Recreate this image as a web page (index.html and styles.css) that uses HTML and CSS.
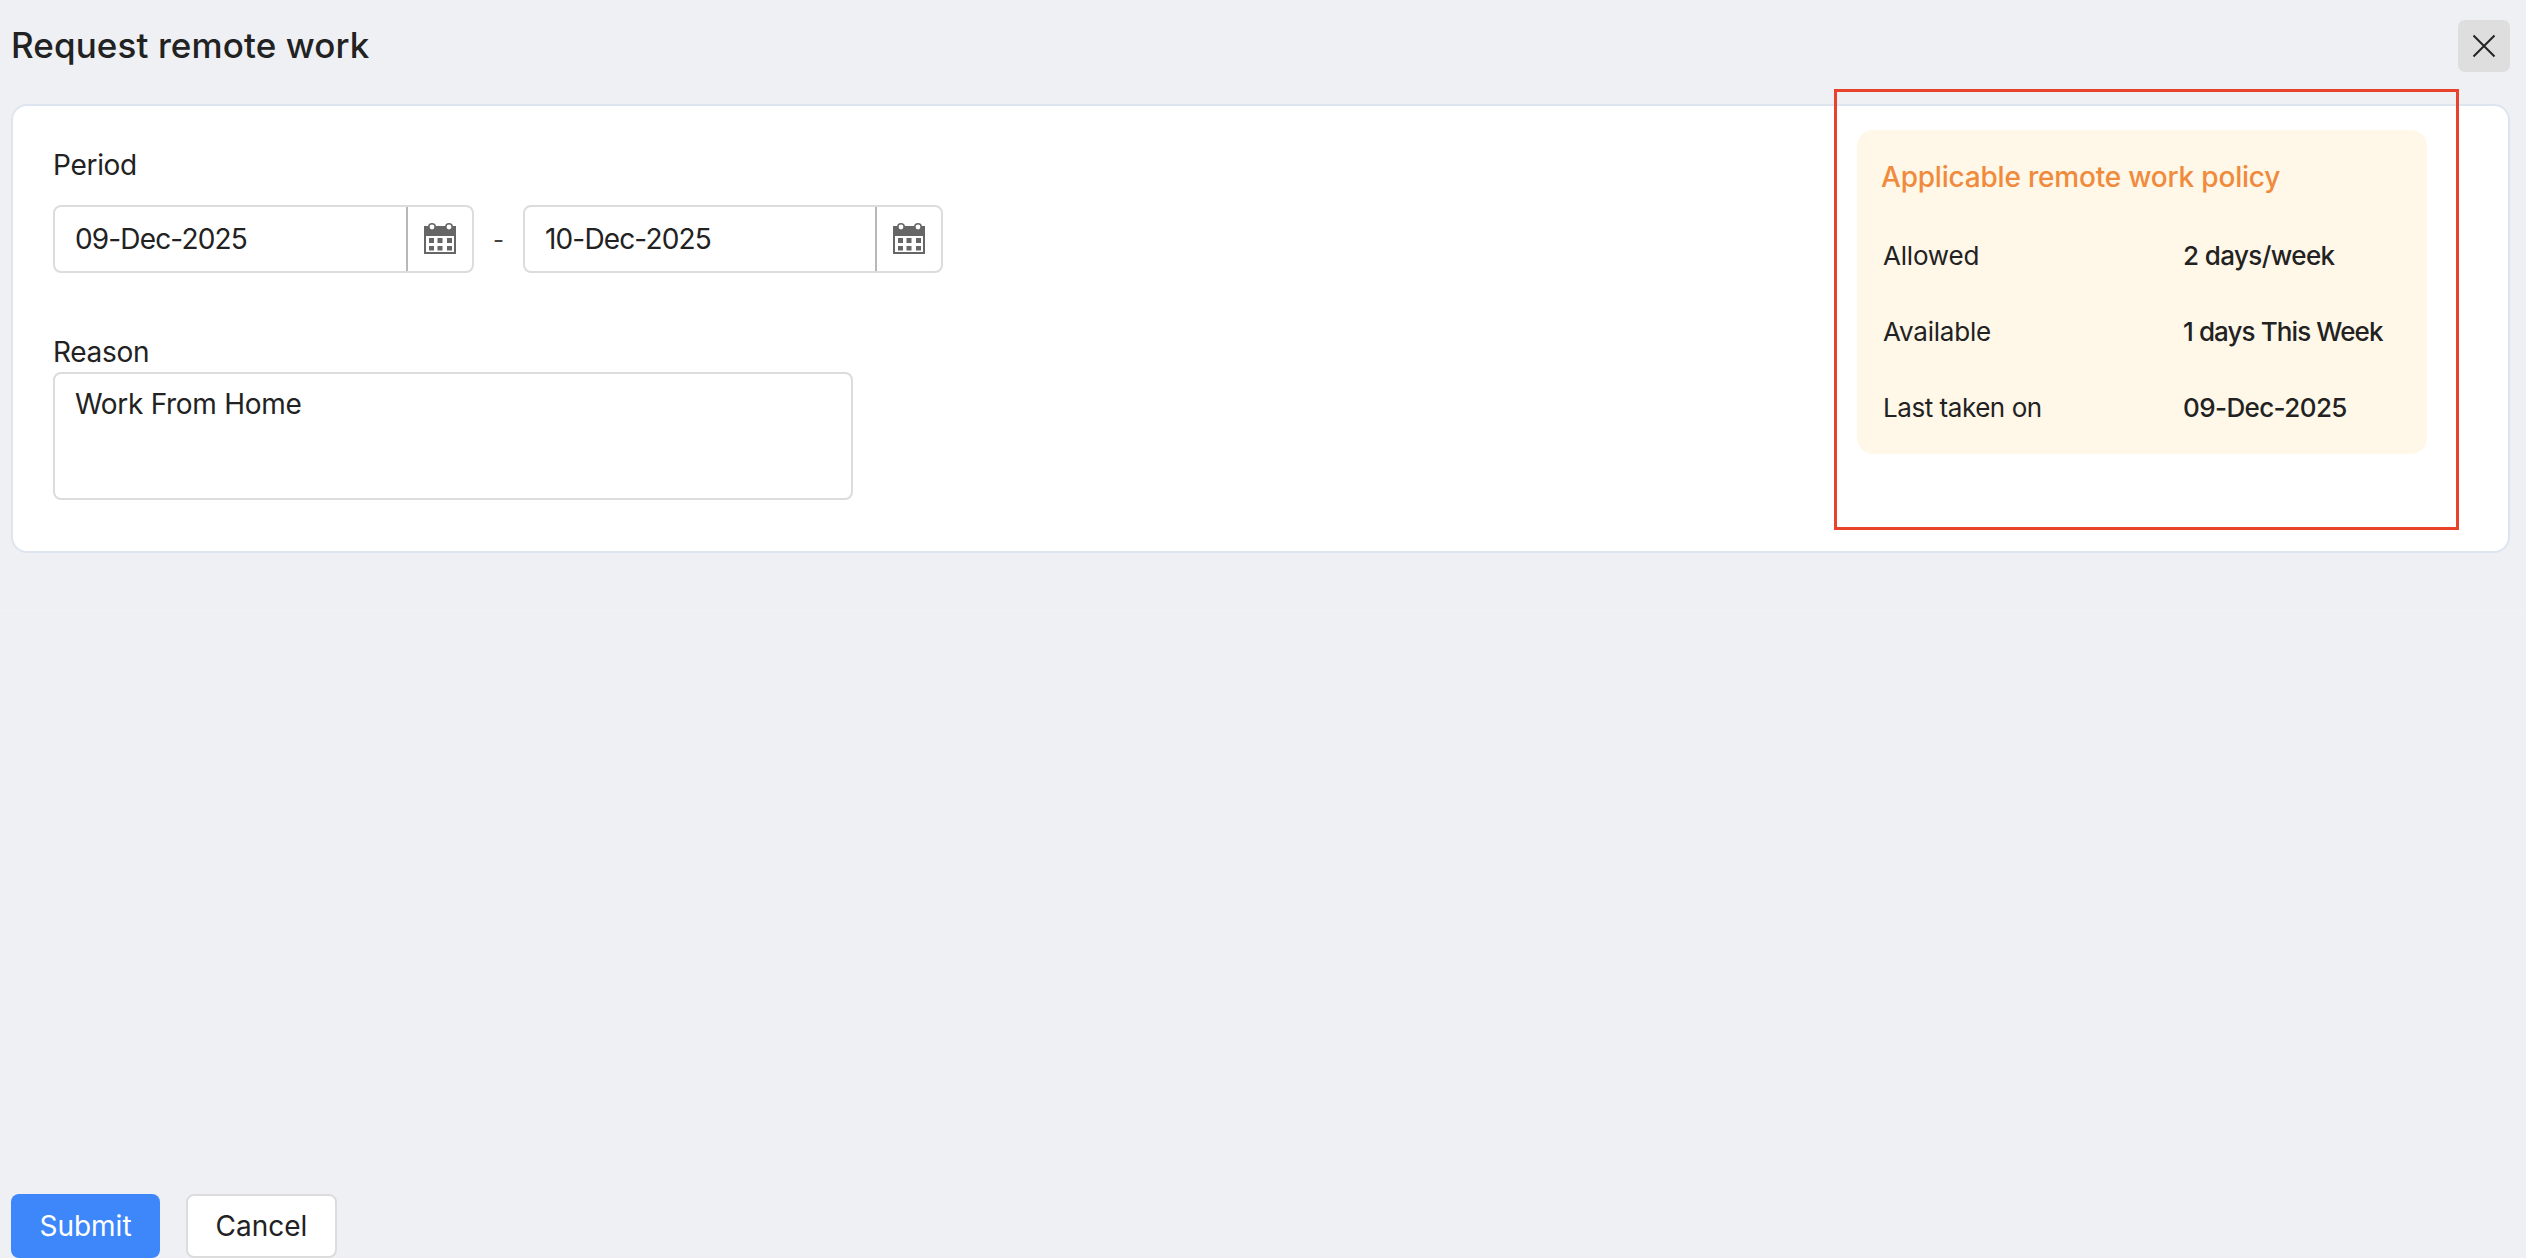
FILE: index.html
```html
<!DOCTYPE html>
<html lang="en">
<head>
<meta charset="utf-8">
<title>Request remote work</title>
<link rel="stylesheet" href="styles.css">
</head>
<body>
<div class="app">
  <header class="header">
    <h1 class="title">Request remote work</h1>
    <button class="close" aria-label="Close">
      <svg width="24" height="24" viewBox="0 0 24 24"><path d="M1.5 1.5L22.5 22.5M22.5 1.5L1.5 22.5" stroke="#222" stroke-width="2" fill="none"/></svg>
    </button>
  </header>
  <main class="card">
    <section class="form">
      <label class="label label-period">Period</label>
      <div class="dates">
        <div class="date date-from">
          <span class="date-value">09-Dec-2025</span>
          <span class="date-icon">
            <svg width="32" height="31" viewBox="0 0 32 31"><rect y="3" width="32" height="28" fill="#666"/><circle cx="8" cy="4" r="4" fill="#666"/><circle cx="25" cy="4" r="4" fill="#666"/><circle cx="8" cy="4" r="2.4" fill="#fff"/><circle cx="25" cy="4" r="2.4" fill="#fff"/><rect x="2" y="13" width="28" height="16" fill="#fff"/><g fill="#666"><rect x="5" y="15" width="5" height="5"/><rect x="13.5" y="15" width="5" height="5"/><rect x="23" y="15" width="5" height="5"/><rect x="5" y="23" width="5" height="4.500"/><rect x="13.500" y="23" width="5" height="4.500"/><rect x="23" y="23" width="5" height="4.500"/></g></svg>
          </span>
        </div>
        <span class="dash">-</span>
        <div class="date">
          <span class="date-value">10-Dec-2025</span>
          <span class="date-icon">
            <svg width="32" height="31" viewBox="0 0 32 31"><rect y="3" width="32" height="28" fill="#666"/><circle cx="8" cy="4" r="4" fill="#666"/><circle cx="25" cy="4" r="4" fill="#666"/><circle cx="8" cy="4" r="2.4" fill="#fff"/><circle cx="25" cy="4" r="2.4" fill="#fff"/><rect x="2" y="13" width="28" height="16" fill="#fff"/><g fill="#666"><rect x="5" y="15" width="5" height="5"/><rect x="13.5" y="15" width="5" height="5"/><rect x="23" y="15" width="5" height="5"/><rect x="5" y="23" width="5" height="4.500"/><rect x="13.500" y="23" width="5" height="4.500"/><rect x="23" y="23" width="5" height="4.500"/></g></svg>
          </span>
        </div>
      </div>
      <label class="label label-reason">Reason</label>
      <div class="reason">Work From Home</div>
    </section>
    <aside class="policy">
      <h2 class="policy-title">Applicable remote work policy</h2>
      <dl class="policy-list">
        <div class="policy-row"><dt>Allowed</dt><dd>2 days/week</dd></div>
        <div class="policy-row"><dt>Available</dt><dd class="tight">1 days This Week</dd></div>
        <div class="policy-row"><dt class="tight-label">Last taken on</dt><dd>09-Dec-2025</dd></div>
      </dl>
    </aside>
  </main>
  <footer class="footer">
    <button class="btn btn-primary">Submit</button>
    <button class="btn btn-secondary">Cancel</button>
  </footer>
  <div class="highlight"></div>
</div>
</body>
</html>
```
FILE: styles.css
```css
* { box-sizing: border-box; }
html, body { margin: 0; padding: 0; }
body { font-family: Inter, "Liberation Sans", sans-serif; color: #222; background: #eef0f4; }
.app { position: relative; width: 2526px; height: 1258px; overflow: hidden; display: flex; flex-direction: column; }
.header { height: 104px; flex: none; display: flex; justify-content: space-between; align-items: flex-start; padding: 20px 16px 0 11px; }
.title { margin: -1px 0 0; font-size: 35px; line-height: 52px; font-weight: 500; color: #222; letter-spacing: 0.1px; }
.close { width: 52px; height: 52px; padding: 0; border: 0; border-radius: 7px; background: #dedede; display: flex; align-items: center; justify-content: center; }
.card { flex: none; height: 449px; margin: 0 16px 0 11px; background: #fff; border: 2px solid #dde5f0; border-radius: 16px; display: flex; justify-content: space-between; padding: 24px 81px 0 40px; }
.label { display: block; font-size: 28px; line-height: 36px; color: #222; letter-spacing: -0.3px; }
.label-period { margin-top: 17px; }
.dates { display: flex; align-items: center; margin-top: 22px; }
.date { width: 420px; height: 68px; display: flex; border: 2px solid #dcdcdc; border-radius: 8px; background: #fff; }
.date-from { width: 421px; }
.date-value { flex: 1; padding-left: 20px; font-size: 28px; line-height: 64px; letter-spacing: -0.85px; }
.date-icon { width: 66px; flex: none; border-left: 2px solid #b8b8b8; display: flex; align-items: center; justify-content: center; padding-bottom: 2px; }
.dash { width: 49px; text-align: center; font-size: 24px; color: #444; }
.label-reason { margin-top: 61px; }
.reason { width: 800px; height: 128px; margin-top: 2px; padding: 12px 20px; border: 2px solid #dcdcdc; border-radius: 8px; font-size: 28px; line-height: 36px; letter-spacing: -0.3px; }
.policy { width: 570px; height: 324px; flex: none; background: #fff7e7; border-radius: 16px; padding: 27px 24px 0; }
.policy-title { margin: 0; font-size: 28px; line-height: 40px; font-weight: 500; color: #f08a3c; letter-spacing: -0.2px; }
.policy-list { margin: 41px 0 0; }
.policy-row { display: flex; height: 76px; align-items: flex-start; padding-left: 2px; font-size: 26px; line-height: 36px; }
.policy-row dt { width: 300px; flex: none; letter-spacing: -0.2px; }
.policy-row dt.tight-label { letter-spacing: -0.45px; }
.policy-row dd { margin: 0; font-weight: 500; letter-spacing: -0.6px; }
.policy-row dd.tight { letter-spacing: -0.9px; }
.footer { flex: 1; margin-top: 57px; border-top: 1px solid #f1f2f5; display: flex; align-items: flex-end; gap: 26px; padding-left: 11px; }
.btn { height: 64px; border-radius: 8px; font-family: Inter, "Liberation Sans", sans-serif; font-size: 28px; padding: 0; }
.btn-primary { width: 149px; background: #3e87fb; color: #fff; border: 0; }
.btn-secondary { width: 151px; background: #fff; color: #222; border: 2px solid #dcdcdc; }
.highlight { position: absolute; left: 1834px; top: 89px; width: 625px; height: 441px; border: 3px solid #e8432a; pointer-events: none; }
```
